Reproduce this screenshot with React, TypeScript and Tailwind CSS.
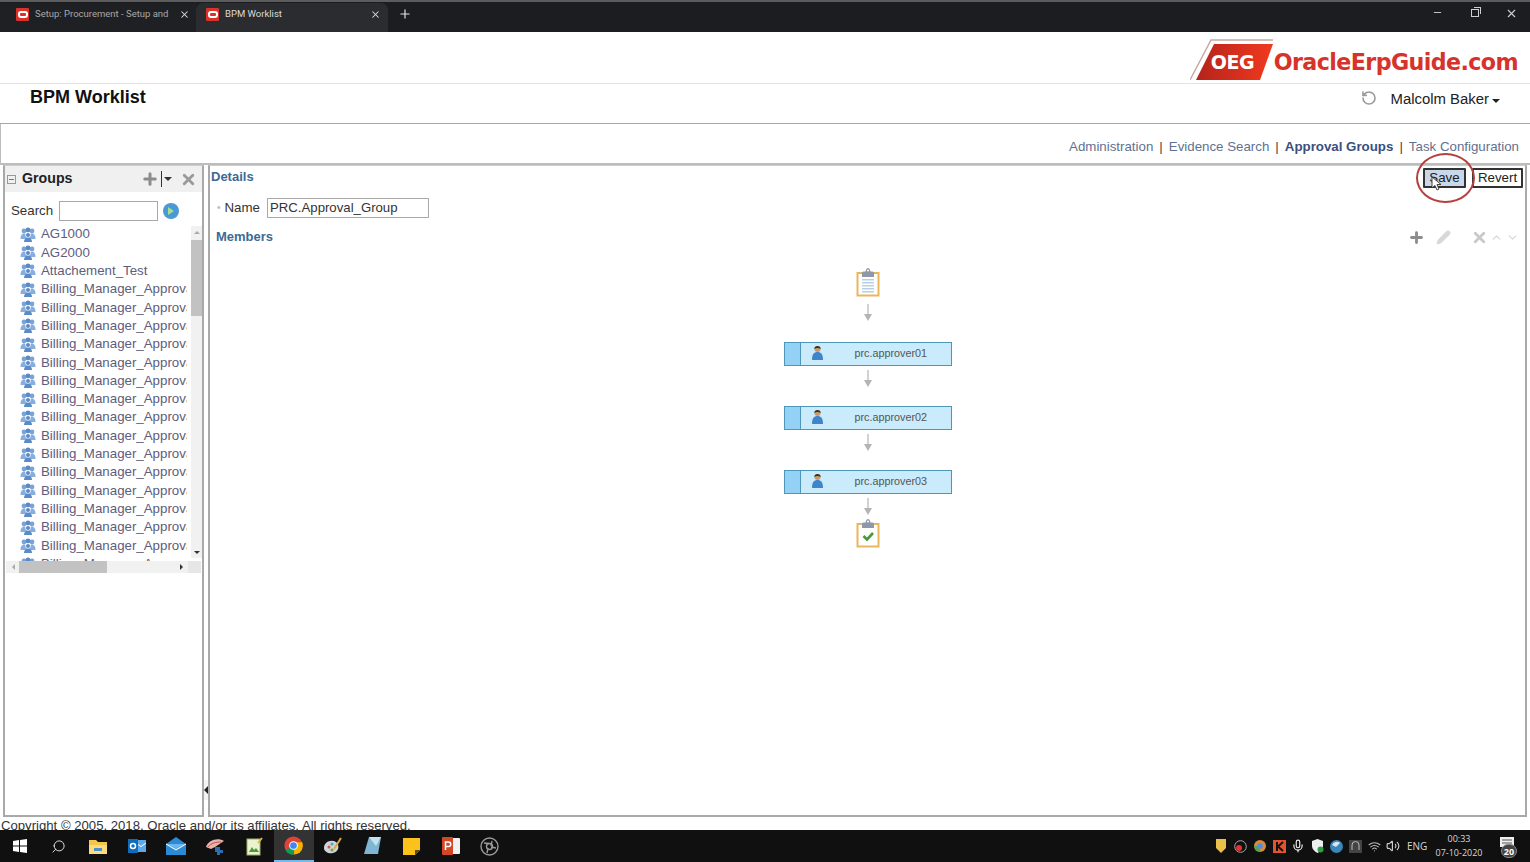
import React from "react";
import { Plus, X, Pencil, ChevronUp, ChevronDown, RotateCcw, Search, Minus, Mic, Volume2, Wifi } from "lucide-react";

const arial = "font-['Liberation_Sans',Arial,sans-serif]";

function OracleFav() {
  return (
    <span className="flex h-[13px] w-[13px] shrink-0 items-center justify-center rounded-[1px] bg-[#d8322a]">
      <span className="h-[7px] w-[10px] rounded-[3px] border-2 border-white" />
    </span>
  );
}

function Tab({ title, active }: { title: string; active?: boolean }) {
  return (
    <div className={`flex h-[29px] items-center pb-[7px] ${active ? "w-[192px] rounded-t-[7px] bg-[#2b2c2f] pl-[10px] pr-[7px]" : "w-[196px] bg-[#1f2023] pl-[16px] pr-[6px]"}`}>
      <OracleFav />
      <span className={`ml-[6px] w-[140px] overflow-hidden whitespace-nowrap text-[9.5px] ${active ? "text-[#dcdcdc]" : "text-[#a8a8a8]"}`}>{title}</span>
      <X className="ml-auto text-[#e0e0e0]" size={11} strokeWidth={2.2} />
    </div>
  );
}

function GroupIcon() {
  return (
    <svg width="16" height="15" viewBox="0 0 16 15" className="shrink-0">
      <circle cx="4" cy="4" r="2.4" fill="#7aa3d8" />
      <circle cx="12" cy="4" r="2.4" fill="#7aa3d8" />
      <circle cx="8" cy="3" r="2.4" fill="#5b8ac6" />
      <path d="M0.5 12c0-4 2-5.5 3.5-5.5S7 8 7 12z" fill="#86aee0" />
      <path d="M9 12c0-4 1.500-5.500 3-5.500s3.500 1.500 3.500 5.500z" fill="#86aee0" />
      <circle cx="8" cy="8" r="2.600" fill="#fff" />
      <circle cx="8" cy="8" r="2" fill="#5b8ac6" />
      <path d="M4 15c0-3 1.800-4.500 4-4.500s4 1.500 4 4.500z" fill="#5b8ac6" />
    </svg>
  );
}

function PersonIcon() {
  return (
    <svg width="13" height="15" viewBox="0 0 12 15" className="-mt-[3px]">
      <circle cx="6" cy="4" r="3" fill="#c99a6b" />
      <path d="M2.800 4C2.500 0 9.500 0 9.200 4 7 2.500 5 2.500 2.800 4z" fill="#3a3226" />
      <path d="M0.500 15c0-6 2-8 5.500-8s5.500 2 5.500 8z" fill="#3f86c9" />
    </svg>
  );
}

function Arrow() {
  return (
    <svg width="10" height="18" viewBox="0 0 10 18" className="block">
      <path d="M5 0v12" stroke="#b4b4b4" strokeWidth="1.200" />
      <path d="M1 10h8l-4 7z" fill="#b4b4b4" />
    </svg>
  );
}

function Node({ name }: { name: string }) {
  return (
    <div className="flex h-[24px] w-[168px] border-[1.5px] border-[#4f96bb] bg-[#c9ebfb]">
      <div className="w-[16.500px] border-r-[1.5px] border-[#4f96bb] bg-[#93d2f5]" />
      <div className="ml-[9.500px] flex items-center"><PersonIcon /></div>
      <span className="ml-[31px] text-[10.8px] leading-[21px] text-[#555]">{name}</span>
    </div>
  );
}

function Clip({ done }: { done?: boolean }) {
  return (
    <svg width="24" height="30" viewBox="0 0 24 30" className="block">
      <rect x="1.500" y="6" width="21" height="22.500" fill="#fff" stroke="#eab65c" strokeWidth="2" />
      <path d="M6 10V6c0-1 1-1.500 2-1.500h1.500C10 2 11 1 12 1s2 1 2.500 3.500H16c1 0 2 .5 2 1.500v4z" fill="#8f98a8" />
      <circle cx="12" cy="3.500" r="1" fill="#fff" />
      {done ? (
        <path d="M7.500 18l3.500 3.500 6-6.500" stroke="#4d9a3a" strokeWidth="2.600" fill="none" />
      ) : (
        <g fill="#b7cfe6">
          <rect x="6" y="12" width="12" height="1.500" />
          <rect x="6" y="15" width="12" height="1.500" />
          <rect x="6" y="18" width="12" height="1.500" />
          <rect x="6" y="21" width="12" height="1.500" />
          <rect x="6" y="24" width="12" height="1.500" />
        </g>
      )}
    </svg>
  );
}

function NavLink({ children, bold }: { children: React.ReactNode; bold?: boolean }) {
  return <span className={bold ? "font-bold text-[#39507f]" : "text-[#5f7190]"}>{children}</span>;
}

function Cell({ children, active }: { children: React.ReactNode; active?: boolean }) {
  return (
    <div className={`flex h-[32px] w-[39.2px] shrink-0 items-center justify-center ${active ? "bg-[#333] border-b-2 border-[#76b9ed]" : ""}`}>
      {children}
    </div>
  );
}

function TaskIcons() {
  return (
    <>
      <Cell>
        <svg width="14" height="14" viewBox="0 0 14 14" fill="#fff">
          <path d="M0 2l6-.9V6.500H0zM7 1l7-1v6.500H7zM0 7.500h6v5.400l-6-.9zM7 7.500h7V14l-7-1z" />
        </svg>
      </Cell>
      <Cell><Search size={15} className="-scale-x-100 text-[#e8e8e8]" strokeWidth={1.500} /></Cell>
      <Cell>
        <svg width="18" height="15" viewBox="0 0 18 15">
          <path d="M0 1h7l2 2h9v12H0z" fill="#f3c64b" />
          <rect x="0" y="6" width="18" height="9" fill="#fadc7d" />
          <rect x="5" y="9" width="8" height="3" fill="#4a90c9" />
        </svg>
      </Cell>
      <Cell>
        <svg width="18" height="16" viewBox="0 0 18 16">
          <rect x="6" y="2" width="12" height="12" fill="#5ea9e6" />
          <path d="M8 5l5 3.500L18 5" stroke="#fff" fill="none" />
          <rect x="0" y="1" width="10" height="14" fill="#0f6cbd" />
          <circle cx="5" cy="8" r="2.500" fill="none" stroke="#fff" strokeWidth="1.500" />
        </svg>
      </Cell>
      <Cell>
        <svg width="20" height="18" viewBox="0 0 20 18">
          <path d="M0 7l10-7 10 7v11H0z" fill="#2a8ad4" />
          <path d="M0 7l10 6 10-6" fill="#6ab7ee" stroke="#fff" strokeWidth="1" />
        </svg>
      </Cell>
      <Cell>
        <svg width="19" height="17" viewBox="0 0 19 17">
          <path d="M0 9C2 2 12-1 18 3L9 9l-4 2z" fill="#e3b5ae" />
          <path d="M2 9c3-4 8-5 13-5" stroke="#c84b3f" fill="none" />
          <path d="M9 9h5v3h3v3h-3v2h-3v-3H9z" fill="#2d6cad" />
        </svg>
      </Cell>
      <Cell>
        <svg width="17" height="19" viewBox="0 0 17 19">
          <rect x="1" y="2" width="13" height="16" fill="#eaf2cf" stroke="#9ab26a" />
          <path d="M3 15l3-5 2 3 2-2 3 4z" fill="#4c9a3f" />
          <path d="M12 6l4-5" stroke="#e0b24a" strokeWidth="2" />
        </svg>
      </Cell>
      <Cell active>
        <svg width="19" height="19" viewBox="0 0 48 48">
          <circle cx="24" cy="24" r="23" fill="#db4437" />
          <path d="M24 24L4 36a23 23 0 0 0 22 11z" fill="#0f9d58" />
          <path d="M24 24l2 23A23 23 0 0 0 46 16H24z" fill="#f4b400" />
          <circle cx="24" cy="24" r="11" fill="#fff" />
          <circle cx="24" cy="24" r="8.500" fill="#4285f4" />
        </svg>
      </Cell>
      <Cell>
        <svg width="20" height="18" viewBox="0 0 20 18">
          <path d="M1 11C1 5 8 2 13 5c4 3 3 10-3 11C6 17 1 15 1 11z" fill="#cfd4d6" />
          <circle cx="6" cy="10" r="1.500" fill="#d9534f" />
          <circle cx="9" cy="7" r="1.500" fill="#4f9fd8" />
          <circle cx="9" cy="13" r="1.500" fill="#65a844" />
          <path d="M11 12L18 1" stroke="#d7a94a" strokeWidth="2" />
        </svg>
      </Cell>
      <Cell>
        <svg width="17" height="18" viewBox="0 0 17 18">
          <path d="M5 0h12l-3 17H0z" fill="#7fb6d3" />
          <path d="M5 0h12l-5 9z" fill="#c3e3ef" />
        </svg>
      </Cell>
      <Cell>
        <svg width="17" height="17" viewBox="0 0 17 17">
          <path d="M0 0h17v12l-5 5H0z" fill="#fbc21b" />
          <path d="M12 17v-5h5z" fill="#5b4a12" />
        </svg>
      </Cell>
      <Cell>
        <svg width="18" height="18" viewBox="0 0 18 18">
          <rect x="5" y="1" width="13" height="16" rx="1" fill="#f2f2f2" />
          <rect x="0" y="0" width="11" height="18" rx="1" fill="#d24726" />
          <path d="M3.500 13V5h3a2.200 2.200 0 0 1 0 4.500h-3" stroke="#fff" strokeWidth="1.500" fill="none" />
        </svg>
      </Cell>
      <Cell>
        <svg width="19" height="19" viewBox="0 0 19 19" fill="none" stroke="#9a9a9a" strokeWidth="1.400">
          <circle cx="9.500" cy="9.500" r="8.500" />
          <circle cx="9.500" cy="9.500" r="3" />
          <path d="M4 6l5 .5M12 4l-1 5M16 11l-5-1M7 16l1-5" />
        </svg>
      </Cell>
    </>
  );
}

function Tray() {
  return (
    <div className="ml-auto flex h-full items-center text-[#d8d8d8]">
      <div className="flex w-[19.5px] justify-center">
        <svg width="10" height="14" viewBox="0 0 10 14"><path d="M0 0h10v9l-5 5-5-5z" fill="#e8c04a" /></svg>
      </div>
      <div className="flex w-[19.5px] justify-center">
        <svg width="13" height="13" viewBox="0 0 13 13" fill="none"><circle cx="6.500" cy="6.500" r="5.800" stroke="#aaa" /><circle cx="5" cy="8" r="3" fill="#d33" /></svg>
      </div>
      <div className="flex w-[19.5px] justify-center">
        <svg width="12" height="12" viewBox="0 0 12 12"><circle cx="6" cy="6" r="6" fill="#db8a37" /><path d="M0 6a6 6 0 0 0 6 6V6z" fill="#5aa04b" /><circle cx="6" cy="6" r="2.800" fill="#4c8fe0" /></svg>
      </div>
      <div className="flex w-[19px] justify-center">
        <svg width="13" height="13" viewBox="0 0 13 13"><rect width="13" height="13" fill="#e0552f" /><path d="M4 2v9M10 2L5 6.500 10 11" stroke="#111" strokeWidth="2" fill="none" /></svg>
      </div>
      <div className="flex w-[18px] justify-center"><Mic size={14} className="text-[#eee]" /></div>
      <div className="flex w-[20px] justify-center">
        <svg width="13" height="14" viewBox="0 0 13 14"><path d="M6.500 0L12 2v5c0 3-2.500 5.500-5.500 7C3.500 12.500 1 10 1 7V2z" fill="#eee" /><circle cx="9.500" cy="10.500" r="3" fill="#2f9e44" /></svg>
      </div>
      <div className="flex w-[19px] justify-center">
        <svg width="13" height="13" viewBox="0 0 13 13"><circle cx="6.500" cy="6.500" r="6.500" fill="#3a86b8" /><path d="M2 5a5 5 0 0 1 8-2L6 7z" fill="#d5e6ee" /></svg>
      </div>
      <div className="flex w-[19px] justify-center">
        <svg width="13" height="13" viewBox="0 0 13 13"><rect width="13" height="13" fill="#444" /><path d="M3 10V5a3.500 3.500 0 0 1 7 0v5" stroke="#bbb" fill="none" /></svg>
      </div>
      <div className="flex w-[19px] justify-center"><Wifi size={13} className="text-[#bbb]" /></div>
      <div className="flex w-[18px] justify-center"><Volume2 size={14} className="text-[#ccc]" /></div>
      <span className="ml-[5px] w-[25px] text-[10px] leading-none">ENG</span>
      <div className="flex w-[54px] flex-col items-center text-[9px] leading-[14px]">
        <span>00:33</span>
        <span>07-10-2020</span>
      </div>
      <div className="relative ml-[7px] mr-[7px] h-[24px] w-[30px]">
        <svg width="14" height="12" viewBox="0 0 14 12" className="absolute left-[7px] top-[3px]">
          <rect width="14" height="10" fill="#eee" />
          <path d="M2 3h10M2 6h10" stroke="#555" />
        </svg>
        <span className="absolute left-[8px] top-[10px] flex h-[14px] w-[16px] items-center justify-center rounded-full border border-[#888] bg-[#444] text-[9px] font-bold leading-none text-white">20</span>
      </div>
    </div>
  );
}

export default function App() {
  const names = [
    "AG1000",
    "AG2000",
    "Attachement_Test",
    ...Array.from({ length: 16 }, () => "Billing_Manager_Approval_Group"),
  ];
  return (
    <div className={`flex h-[862px] w-[1530px] flex-col overflow-hidden bg-white ${arial}`}>
      {/* browser bar */}
      <div className="flex h-[32px] shrink-0 items-end border-t-2 border-[#5c5c5c] bg-[#1c1d20] font-['Roboto',sans-serif]">
        <div className="flex items-end">
          <Tab title="Setup: Procurement - Setup and" />
          <Tab title="BPM Worklist" active />
        </div>
        <div className="ml-[10px] flex h-[29px] items-center pb-[7px]"><Plus size={14} className="text-[#e6e6e6]" /></div>
        <div className="ml-auto flex h-[29px] items-start pt-[4px] text-[#d0d0d0]">
          <div className="flex w-[37px] justify-center"><Minus size={11} /></div>
          <div className="flex w-[37px] justify-center">
            <span className="relative mt-[2px] h-[8px] w-[8px] border border-[#d0d0d0]">
              <span className="absolute -right-[3px] -top-[3px] h-[7px] w-[7px] border-r border-t border-[#d0d0d0]" />
            </span>
          </div>
          <div className="flex w-[37px] justify-center"><X size={13} /></div>
        </div>
      </div>

      {/* logo band */}
      <div className="flex h-[52px] shrink-0 items-center justify-end border-b border-[#e3e3e3] pr-[12px]">
        <div className="relative mt-[5px] h-[42px] w-[84px] shrink-0">
          <svg width="84" height="42" viewBox="0 0 84 42" className="block">
            <defs>
              <linearGradient id="oeg" x1="0" x2="1" y1="0" y2="0">
                <stop offset="0" stopColor="#b3241b" />
                <stop offset="1" stopColor="#f2391f" />
              </linearGradient>
            </defs>
            <path d="M0 41L21 1h62" stroke="#c9a8a0" strokeWidth="1.500" fill="none" />
            <path d="M24 5h59L70 41H6z" fill="url(#oeg)" />
          </svg>
          <span className="absolute left-[21px] top-[14px] font-['DejaVu_Sans',sans-serif] text-[19px] font-bold leading-none tracking-[-0.4px] text-white">OEG</span>
        </div>
        <span className="mt-[10px] font-['DejaVu_Sans',sans-serif] text-[22.2px] font-bold leading-none tracking-[-0.6px] text-[#d8332a]">OracleErpGuide.com</span>
      </div>

      {/* title row */}
      <div className="flex h-[40px] shrink-0 items-start border-b border-[#a8a8a8] pl-[30px] pr-[30px]">
        <span className="mt-[3px] text-[18px] font-bold leading-[20px] text-[#111]">BPM Worklist</span>
        <RotateCcw size={16} className="ml-auto mt-[6px] text-[#999]" strokeWidth={2.4} />
        <span className="ml-[14px] mt-[7px] text-[14.9px] leading-[17px] text-[#222]">Malcolm Baker</span>
        <span className="ml-[3px] mt-[15px] h-0 w-0 border-x-[4px] border-t-[4px] border-x-transparent border-t-[#222]" />
      </div>

      {/* nav row */}
      <div className="flex h-[41px] shrink-0 items-center justify-end gap-[6px] border-b-2 border-l border-[#bdbdbd] pr-[11px] pt-[6px] text-[13.3px] leading-none">
        <NavLink>Administration</NavLink>
        <span className="text-[#444]">|</span>
        <NavLink>Evidence Search</NavLink>
        <span className="text-[#444]">|</span>
        <NavLink bold>Approval Groups</NavLink>
        <span className="text-[#444]">|</span>
        <NavLink>Task Configuration</NavLink>
      </div>

      {/* panels */}
      <div className="flex h-[652px] shrink-0 pl-[3px] pr-[3px]">
        {/* left */}
        <div className="flex h-full w-[201px] shrink-0 flex-col border-x-2 border-b-2 border-[#a9a9a9] border-t border-t-[#ccc]">
          <div className="flex h-[26px] shrink-0 items-center bg-[#f0f0f0] pl-[2px] pr-[5px]">
            <span className="flex h-[9px] w-[9px] items-center justify-center border border-[#999]">
              <span className="h-px w-[5px] bg-[#777]" />
            </span>
            <span className="ml-[6px] text-[14.2px] font-bold text-[#222]">Groups</span>
            <Plus size={18} strokeWidth={4} className="ml-auto text-[#8c8c8c]" />
            <span className="mx-[2px] h-[16px] w-px bg-[#333]" />
            <span className="mr-[8px] h-0 w-0 border-x-[4px] border-t-[4px] border-x-transparent border-t-[#333]" />
            <X size={17} strokeWidth={4} className="text-[#9a9a9a]" />
          </div>
          <div className="mt-[8px] flex h-[21px] shrink-0 items-center pl-[6px]">
            <span className="text-[13.3px] text-[#333]">Search</span>
            <span className="ml-[6px] h-[20px] w-[99px] border border-[#a8a8a8] bg-white" />
            <span className="ml-[5px] flex h-[16px] w-[16px] items-center justify-center rounded-full bg-[#4a98d6]">
              <span className="h-0 w-0 border-y-[4px] border-l-[6px] border-y-transparent border-l-[#a5e08b]" />
            </span>
          </div>
          <div className="relative mt-[4px] h-[348px] w-full shrink-0 overflow-hidden">
            <div className="w-[182px] overflow-hidden">
              {names.map((n, i) => (
                <div key={i} className="flex h-[18.330px] items-center whitespace-nowrap pl-[15px] text-[13.3px] text-[#5d5d7d]">
                  <GroupIcon />
                  <span className="ml-[5px]">{n}</span>
                </div>
              ))}
            </div>
            {/* vertical scrollbar */}
            <div className="absolute right-0 top-[1px] flex h-[332px] w-[11px] flex-col items-center bg-[#f1f1f1]">
              <span className="mt-[5px] h-0 w-0 border-x-[3px] border-b-[3px] border-x-transparent border-b-[#aaa]" />
              <span className="mt-[6px] h-[76px] w-full bg-[#c2c2c2]" />
              <span className="mt-auto mb-[4px] h-0 w-0 border-x-[3px] border-t-[3px] border-x-transparent border-t-[#333]" />
            </div>
            {/* horizontal scrollbar */}
            <div className="absolute bottom-0 left-[1px] flex h-[12px] w-[195px] items-center bg-[#f1f1f1]">
              <span className="ml-[6px] h-0 w-0 border-y-[3px] border-r-[3px] border-y-transparent border-r-[#aaa]" />
              <span className="ml-[4px] h-full w-[88px] bg-[#c2c2c2]" />
              <span className="ml-[73px] h-0 w-0 border-y-[3px] border-l-[3px] border-y-transparent border-l-[#333]" />
              <span className="ml-auto h-full w-[13px] bg-[#e6e6e6]" />
            </div>
          </div>
        </div>

        {/* splitter */}
        <div className="relative w-[4px] shrink-0">
          <div className="absolute left-0 top-[615px] flex h-[20px] w-[5px] items-center bg-[#f4f4f4]">
            <span className="h-0 w-0 border-y-[4px] border-r-[4px] border-y-transparent border-r-[#222]" />
          </div>
        </div>

        {/* right */}
        <div className="relative flex h-full min-w-0 flex-1 flex-col border-x-2 border-b-2 border-[#a9a9a9] border-t border-t-[#ccc]">
          <div className="mt-[2px] flex h-[17px] shrink-0 items-center pl-[1px] pr-[2px]">
            <span className="text-[13px] font-bold text-[#3c6a94]">Details</span>
            <div className="ml-auto mt-[3px] flex items-center gap-[6px] text-[13.3px] leading-none text-[#222]">
              <span className="flex h-[20px] w-[43px] items-center justify-center rounded-[1px] border-2 border-[#333] bg-[#c9d7ea]">Save</span>
              <span className="flex h-[20px] w-[51px] items-center justify-center rounded-[1px] border-2 border-[#333] bg-white">Revert</span>
            </div>
          </div>
          <div className="mt-[12px] flex h-[21px] shrink-0 items-center pl-[7px]">
            <span className="text-[10px] text-[#bbb]">•</span>
            <span className="ml-[4px] text-[13.3px] text-[#333]">Name</span>
            <span className="ml-[7px] flex h-[20px] w-[162px] items-center border border-[#a8a8a8] pl-[2px] text-[13.2px] text-[#333]">PRC.Approval_Group</span>
          </div>
          <div className="mt-[11px] flex h-[16px] shrink-0 items-center pl-[6px] pr-[6px]">
            <span className="text-[13px] font-bold text-[#3c6a94]">Members</span>
            <Plus size={17} strokeWidth={4} className="ml-auto text-[#8c8c8c]" />
            <Pencil size={15} fill="currentColor" className="ml-[11px] text-[#d8d8d8]" />
            <X size={17} strokeWidth={4} className="ml-[20px] mr-[2px] text-[#c9c9c9]" />
            <ChevronUp size={13} className="text-[#d5d5d5]" />
            <ChevronDown size={13} className="ml-[3px] text-[#d5d5d5]" />
          </div>
          <div className="mt-[22px] flex flex-col items-center">
            <Clip />
            <div className="mt-[7px]"><Arrow /></div>
            <div className="mt-[20px]"><Node name="prc.approver01" /></div>
            <div className="mt-[4px]"><Arrow /></div>
            <div className="mt-[18px]"><Node name="prc.approver02" /></div>
            <div className="mt-[4px]"><Arrow /></div>
            <div className="mt-[18px]"><Node name="prc.approver03" /></div>
            <div className="mt-[4px]"><Arrow /></div>
            <div className="mt-[2px]"><Clip done /></div>
          </div>
          {/* highlight circle */}
          <div className="absolute right-[50px] -top-[13px] h-[50px] w-[59px] rounded-[50%] border-[2.5px] border-[#b5403f]" />
          {/* cursor */}
          <svg width="11" height="16" viewBox="0 0 11 16" className="absolute right-[83px] top-[10px]">
            <path d="M1 1v11l3-2.500 2 4.500 2-1-2-4.500h4z" fill="#fff" stroke="#333" strokeWidth="0.900" />
          </svg>
        </div>
      </div>

      {/* copyright */}
      <div className="h-[13px] shrink-0 overflow-hidden whitespace-nowrap pl-[1px] text-[13.15px] leading-[18px] text-[#333]">
        Copyright © 2005, 2018, Oracle and/or its affiliates. All rights reserved.
      </div>

      {/* taskbar */}
      <div className="flex h-[32px] shrink-0 items-center bg-[#101010] font-['Open_Sans',sans-serif]">
        <TaskIcons />
        <Tray />
      </div>
    </div>
  );
}
